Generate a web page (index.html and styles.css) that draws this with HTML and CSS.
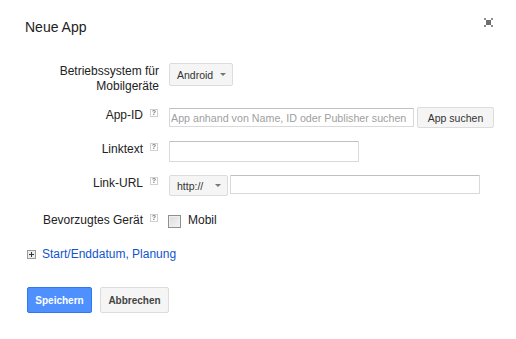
FILE: index.html
```html
<!DOCTYPE html>
<html lang="de">
<head>
<meta charset="utf-8">
<title>Neue App</title>
<link rel="stylesheet" href="styles.css">
</head>
<body>
<div class="dialog">
  <div class="header">
    <h1 class="title">Neue App</h1>
    <span class="close" aria-label="Schließen">
      <svg width="9" height="9" viewBox="0 0 9 9">
        <rect x="0" y="0" width="2" height="2" fill="#8c8c8c"/>
        <rect x="7" y="0" width="2" height="2" fill="#8c8c8c"/>
        <rect x="0" y="7" width="2" height="2" fill="#8c8c8c"/>
        <rect x="7" y="7" width="2" height="2" fill="#8c8c8c"/>
        <rect x="2" y="2" width="5" height="5" fill="#6e6e6e"/>
      </svg>
    </span>
  </div>

  <div class="form">
    <div class="row">
      <div class="label"><span class="label-text">Betriebssystem für<br>Mobilgeräte</span></div>
      <div class="field">
        <span class="dropdown dropdown-os"><span>Android</span><span class="arrow"></span></span>
      </div>
    </div>

    <div class="row">
      <div class="label"><span class="label-text">App-ID</span><span class="help">?</span></div>
      <div class="field field-center">
        <input class="input input-app" type="text" placeholder="App anhand von Name, ID oder Publisher suchen">
        <span class="btn btn-search">App suchen</span>
      </div>
    </div>

    <div class="row">
      <div class="label"><span class="label-text">Linktext</span><span class="help">?</span></div>
      <div class="field">
        <input class="input input-text" type="text">
      </div>
    </div>

    <div class="row row-url">
      <div class="label"><span class="label-text">Link-URL</span><span class="help">?</span></div>
      <div class="field field-url">
        <span class="dropdown dropdown-proto"><span>http://</span><span class="arrow"></span></span>
        <input class="input input-url" type="text">
      </div>
    </div>

    <div class="row">
      <div class="label"><span class="label-text">Bevorzugtes Gerät</span><span class="help">?</span></div>
      <div class="field field-check">
        <span class="checkbox"></span><span class="check-label">Mobil</span>
      </div>
    </div>
  </div>

  <div class="more">
    <span class="plus"><span class="plus-h"></span><span class="plus-v"></span></span>
    <a class="more-link" href="#">Start/Enddatum, Planung</a>
  </div>

  <div class="actions">
    <span class="btn-primary">Speichern</span>
    <span class="btn-secondary">Abbrechen</span>
  </div>
</div>
</body>
</html>
```

FILE: styles.css
```css
* { box-sizing: border-box; }

html, body {
  margin: 0;
  padding: 0;
  background: #fff;
}

body {
  font-family: "Liberation Sans", Arial, sans-serif;
  color: #222;
}

.dialog {
  width: 516px;
  height: 339px;
  padding: 0 23px 0 25px;
}

.header {
  display: flex;
  justify-content: space-between;
  align-items: flex-start;
  padding-top: 19px;
}

.title {
  margin: 0;
  font-size: 14px;
  font-weight: normal;
  line-height: 17px;
  color: #222;
}

.close {
  display: block;
  width: 9px;
  height: 9px;
  margin-top: -1px;
}

.close svg { display: block; }

.form {
  padding-top: 27px;
}

.row {
  display: flex;
  align-items: flex-start;
  margin-bottom: 13px;
}

.row-url { margin-bottom: 16px; }

.label {
  width: 134px;
  flex: none;
  display: flex;
  justify-content: flex-end;
  align-items: flex-start;
  text-align: right;
  font-size: 12px;
  line-height: 15px;
  padding-top: 1px;
  color: #222;
}

.help {
  display: block;
  width: 8px;
  height: 8px;
  margin: 1px 1px 0 7px;
  border: 1px solid #d0d0d0;
  font-size: 7px;
  font-weight: bold;
  line-height: 6px;
  text-align: center;
  color: #7a7a7a;
  overflow: hidden;
}

.field {
  margin-left: 10px;
  display: flex;
  align-items: flex-start;
  gap: 3px;
}

.field-center { align-items: center; }

.field-url { gap: 2px; }

.dropdown {
  display: flex;
  align-items: center;
  justify-content: space-between;
  padding: 0 6px 0 7px;
  background: #f5f5f5;
  border: 1px solid #dcdcdc;
  border-radius: 2px;
  font-size: 10.5px;
  color: #333;
}

.dropdown-os {
  width: 64px;
  height: 23px;
}

.dropdown-proto {
  width: 59px;
  height: 21px;
}

.arrow {
  display: block;
  width: 0;
  height: 0;
  border-left: 3px solid transparent;
  border-right: 3px solid transparent;
  border-top: 3px solid #777;
}

.input {
  display: block;
  margin: 0;
  padding: 0 1px;
  border: 1px solid #d9d9d9;
  border-top-color: #c0c0c0;
  border-radius: 1px;
  background: #fff;
  font-family: "Liberation Sans", Arial, sans-serif;
  font-size: 10.7px;
  color: #222;
  outline: none;
}

.input::placeholder { color: #a0a0a0; }

.input-app {
  width: 245px;
  height: 19px;
}

.input-text {
  width: 190px;
  height: 21px;
}

.input-url {
  width: 250px;
  height: 19px;
}

.btn {
  display: flex;
  align-items: center;
  justify-content: center;
  background: #f5f5f5;
  border: 1px solid #dcdcdc;
  border-radius: 2px;
  font-size: 10.5px;
  color: #333;
}

.btn-search {
  width: 77px;
  height: 21px;
}

.field-check {
  gap: 0;
  font-size: 12px;
  line-height: 15px;
  padding-top: 1px;
}

.checkbox {
  display: block;
  width: 13px;
  height: 13px;
  margin-top: 2px;
  margin-left: -1px;
  border: 1px solid #8f8f8f;
  background: linear-gradient(135deg, #dcdcdc, #f4f4f4);
  box-shadow: inset 0 0 0 1px #f0f0f0;
}

.check-label {
  margin-left: 7px;
  color: #222;
}

.more {
  display: flex;
  align-items: center;
  margin-top: 19px;
  padding-left: 2px;
  height: 15px;
}

.plus {
  position: relative;
  display: block;
  width: 9px;
  height: 9px;
  border: 1px solid #9a9a9a;
  background: #ececec;
}

.plus-h {
  position: absolute;
  left: 1px;
  top: 3px;
  width: 5px;
  height: 1px;
  background: #333;
}

.plus-v {
  position: absolute;
  left: 3px;
  top: 1px;
  width: 1px;
  height: 5px;
  background: #333;
}

.more-link {
  margin-left: 6px;
  font-size: 12px;
  line-height: 15px;
  color: #1155cc;
  text-decoration: none;
}

.actions {
  display: flex;
  gap: 8px;
  margin-top: 25px;
  padding-left: 2px;
}

.btn-primary,
.btn-secondary {
  display: flex;
  align-items: center;
  justify-content: center;
  height: 26px;
  border-radius: 2px;
  font-size: 10px;
  font-weight: bold;
}

.btn-primary {
  width: 65px;
  background: #4d90fe;
  border: 1px solid #3079ed;
  color: #fff;
}

.btn-secondary {
  width: 69px;
  background: #f5f5f5;
  border: 1px solid #dcdcdc;
  color: #444;
}
```
